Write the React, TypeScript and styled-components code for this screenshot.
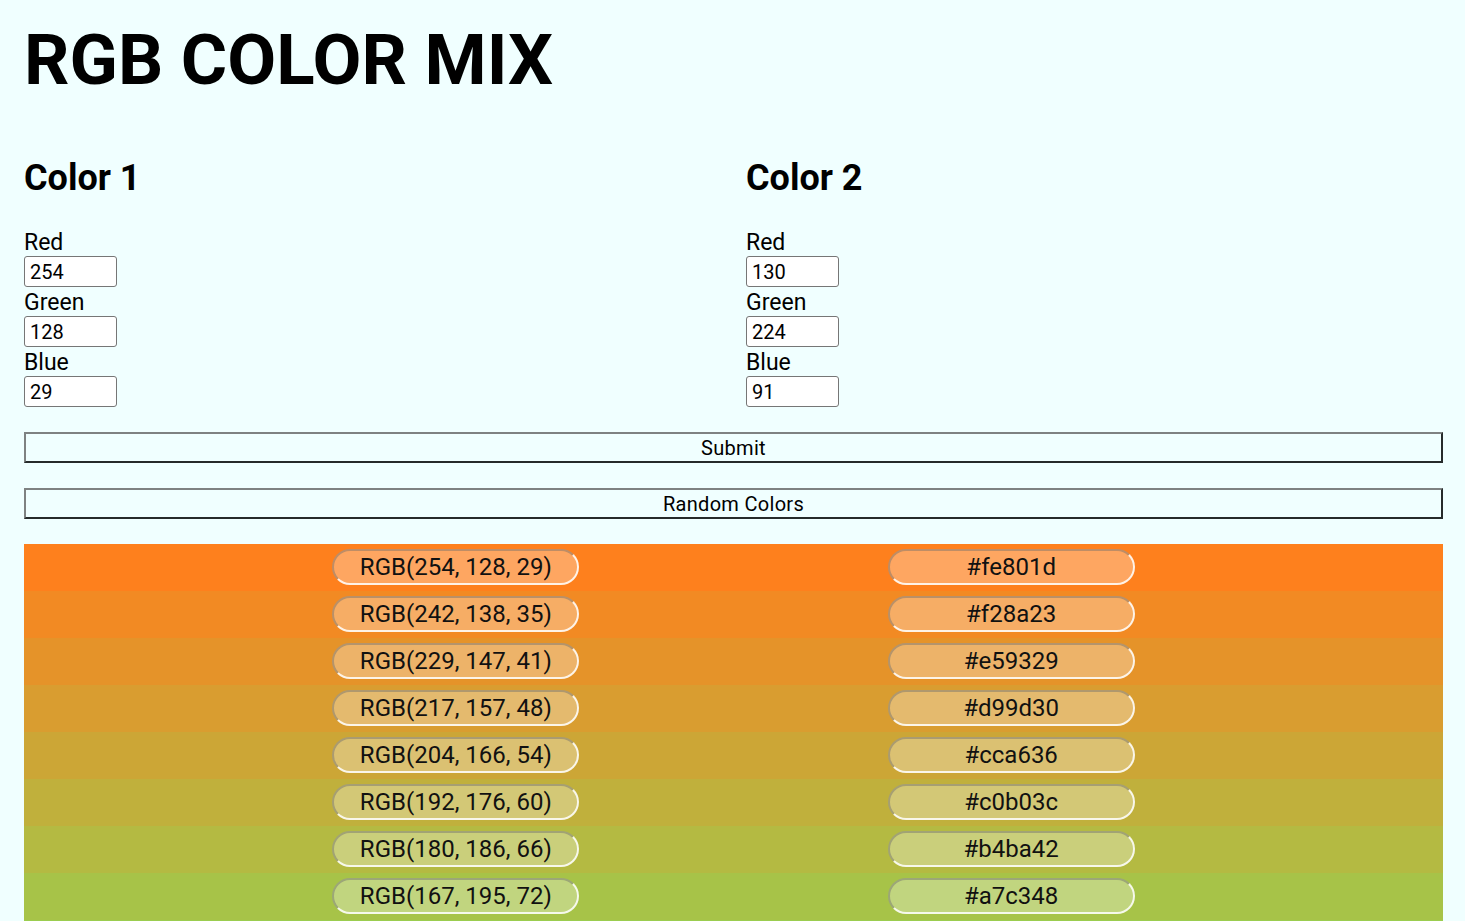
import React, { useState } from "react";
import styled, { createGlobalStyle } from "styled-components";

const GlobalStyle = createGlobalStyle`
  html, body {
    margin: 0;
    padding: 0;
    background: #f0ffff;
    font-family: Roboto, "Liberation Sans", sans-serif;
    color: #000;
  }
  * { box-sizing: border-box; }
`;

const Page = styled.main`
  padding: 18px 22px 0 24px;
`;

const Title = styled.h1`
  margin: 0;
  font-size: 71px;
  line-height: 84px;
  font-weight: 700;
`;

const Columns = styled.div`
  display: grid;
  grid-template-columns: 722px 1fr;
  margin-top: 55px;
`;

const Column = styled.section`
  display: flex;
  flex-direction: column;
  align-items: flex-start;
`;

const ColumnTitle = styled.h2`
  margin: 0 0 30px;
  font-size: 36px;
  line-height: 42px;
  font-weight: 700;
`;

const Field = styled.label`
  display: flex;
  flex-direction: column;
  align-items: flex-start;
  margin-bottom: 2px;
  &:last-child { margin-bottom: 0; }
`;

const FieldLabel = styled.span`
  font-size: 23px;
  line-height: 27px;
`;

const NumberInput = styled.input`
  width: 93px;
  height: 31px;
  padding: 0 5px;
  border: 1px solid #767676;
  border-radius: 3px;
  background: #fff;
  font-family: Roboto, "Liberation Sans", sans-serif;
  font-size: 20px;
  color: #000;
`;

const WideButton = styled.button`
  display: block;
  width: 100%;
  height: 31px;
  margin-top: 25px;
  padding: 0;
  background: transparent;
  border-style: solid;
  border-width: 2px;
  border-color: #7e8282 #262b2b #262b2b #7e8282;
  font-family: Roboto, "Liberation Sans", sans-serif;
  font-size: 20px;
  letter-spacing: 0.3px;
  color: #000;
  cursor: pointer;
`;

const Gradient = styled.div`
  margin-top: 25px;
  display: flex;
  flex-direction: column;
`;

const Row = styled.div<{ $bg: string }>`
  height: 47px;
  padding-top: 5px;
  display: flex;
  align-items: flex-start;
  justify-content: space-evenly;
  background: ${(p) => p.$bg};
`;

const Pill = styled.span`
  width: 247px;
  height: 36px;
  display: flex;
  align-items: center;
  justify-content: center;
  border-radius: 18px;
  background: rgba(255, 255, 255, 0.3);
  border-style: solid;
  border-width: 2px;
  border-color: rgba(110, 110, 110, 0.45) rgba(255, 255, 255, 0.85) rgba(255, 255, 255, 0.85) rgba(110, 110, 110, 0.45);
  font-size: 24px;
  color: #111;
`;

type RGB = [number, number, number];

const hex = (c: RGB) => "#" + c.map((v) => v.toString(16).padStart(2, "0")).join("");

const mix = (a: RGB, b: RGB, steps: number): RGB[] =>
  Array.from({ length: steps + 1 }, (_, k) =>
    a.map((v, i) => Math.round(v + ((b[i] - v) * k) / steps)) as RGB
  );

const ColorInputs: React.FC<{ title: string; value: RGB; onChange: (v: RGB) => void }> = ({
  title,
  value,
  onChange,
}) => {
  const names = ["Red", "Green", "Blue"];
  return (
    <Column>
      <ColumnTitle>{title}</ColumnTitle>
      {names.map((n, i) => (
        <Field key={n}>
          <FieldLabel>{n}</FieldLabel>
          <NumberInput
            value={value[i]}
            onChange={(e) => {
              const next = [...value] as RGB;
              next[i] = Number(e.target.value) || 0;
              onChange(next);
            }}
          />
        </Field>
      ))}
    </Column>
  );
};

export default function App() {
  const [c1, setC1] = useState<RGB>([254, 128, 29]);
  const [c2, setC2] = useState<RGB>([130, 224, 91]);
  const [mixed, setMixed] = useState<RGB[]>(mix([254, 128, 29], [130, 224, 91], 10));

  const random = () => {
    const r = (): RGB => [0, 0, 0].map(() => Math.floor(Math.random() * 256)) as RGB;
    const a = r();
    const b = r();
    setC1(a);
    setC2(b);
    setMixed(mix(a, b, 10));
  };

  return (
    <>
      <GlobalStyle />
      <Page>
        <Title>RGB COLOR MIX</Title>
        <Columns>
          <ColorInputs title="Color 1" value={c1} onChange={setC1} />
          <ColorInputs title="Color 2" value={c2} onChange={setC2} />
        </Columns>
        <WideButton onClick={() => setMixed(mix(c1, c2, 10))}>Submit</WideButton>
        <WideButton onClick={random}>Random Colors</WideButton>
        <Gradient>
          {mixed.map((c, i) => (
            <Row key={i} $bg={`rgb(${c[0]}, ${c[1]}, ${c[2]})`}>
              <Pill>{`RGB(${c[0]}, ${c[1]}, ${c[2]})`}</Pill>
              <Pill>{hex(c)}</Pill>
            </Row>
          ))}
        </Gradient>
      </Page>
    </>
  );
}
